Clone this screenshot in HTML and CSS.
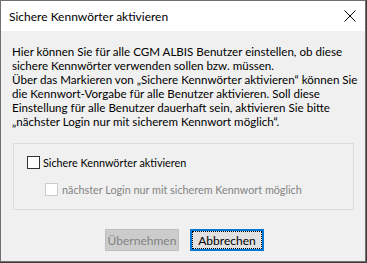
FILE: index.html
```html
<!DOCTYPE html>
<html lang="de">
<head>
<meta charset="utf-8">
<link rel="stylesheet" href="styles.css">
</head>
<body>
<div class="dialog">
  <div class="titlebar">
    <span class="title">Sichere Kennwörter aktivieren</span>
    <svg class="close" width="12" height="12" viewBox="0 0 12 12"><path d="M0.5 0.5 L11.5 11.5 M11.5 0.5 L0.5 11.5" stroke="#000" stroke-width="1" fill="none"/></svg>
  </div>
  <div class="content">
    <p class="info">Hier können Sie für alle CGM ALBIS Benutzer einstellen, ob diese<br>sichere Kennwörter verwenden sollen bzw. müssen.<br>Über das Markieren von „Sichere Kennwörter aktivieren“ können Sie<br>die Kennwort-Vorgabe für alle Benutzer aktivieren. Soll diese<br>Einstellung für alle Benutzer dauerhaft sein, aktivieren Sie bitte<br>„nächster Login nur mit sicherem Kennwort möglich“.</p>
    <div class="group">
      <label class="check"><span class="box"></span>Sichere Kennwörter aktivieren</label>
      <label class="check sub disabled"><span class="box"></span>nächster Login nur mit sicherem Kennwort möglich</label>
    </div>
    <div class="buttons">
      <button class="btn disabled">Übernehmen</button>
      <button class="btn focus"><span class="dots">Abbrechen</span></button>
    </div>
  </div>
</div>
</body>
</html>
```
FILE: styles.css
```css
html, body {
  margin: 0;
  padding: 0;
  background: #3c3c3c;
}
body {
  font-family: Lato, "Liberation Sans", Arial, sans-serif;
  font-size: 12px;
  color: #000;
}
.dialog {
  width: 366px;
  height: 262px;
  box-sizing: border-box;
  border: 1px solid #707070;
  background: #f0f0f0;
  display: flex;
  flex-direction: column;
  overflow: hidden;
  white-space: nowrap;
}
.titlebar {
  height: 30px;
  background: #fff;
  display: flex;
  align-items: center;
  justify-content: space-between;
  padding: 0 9px 0 8px;
  flex-shrink: 0;
}
.title {
  font-size: 12px;
}
.content {
  padding: 14px 12px 0 11px;
  display: flex;
  flex-direction: column;
}
.info {
  margin: 0;
  font-size: 11.6px;
  line-height: 14px;
}
.group {
  margin: 14px 0 0 1px;
  width: 341px;
  height: 67px;
  box-sizing: border-box;
  border: 1px solid #dcdcdc;
  padding: 12px 0 0 13px;
  display: flex;
  flex-direction: column;
  gap: 14px;
  font-size: 10.8px;
}
.check {
  display: flex;
  align-items: center;
  height: 13px;
}
.box {
  width: 13px;
  height: 13px;
  box-sizing: border-box;
  border: 1px solid #333;
  background: #fff;
  margin-right: 3px;
}
.sub {
  margin-left: 18px;
}
.disabled {
  color: #838383;
}
.check.disabled .box {
  border-color: #cccccc;
  background: #fff;
  margin-right: 4px;
}
.buttons {
  display: flex;
  justify-content: center;
  gap: 11px;
  margin-top: 19px;
  padding-left: 4px;
}
.btn {
  font-family: Lato, "Liberation Sans", Arial, sans-serif;
  font-size: 12px;
  height: 22px;
  width: 74px;
  box-sizing: border-box;
  padding: 0;
}
.btn.disabled {
  background: #cccccc;
  border: 1px solid #bfbfbf;
  color: #838383;
}
.btn.focus {
  background: #e1e1e1;
  border: 2px solid #0078d7;
  color: #000;
  display: flex;
  align-items: stretch;
  justify-content: stretch;
}
.dots {
  flex: 1;
  border: 1px dotted #000;
  display: flex;
  align-items: center;
  justify-content: center;
}
```
